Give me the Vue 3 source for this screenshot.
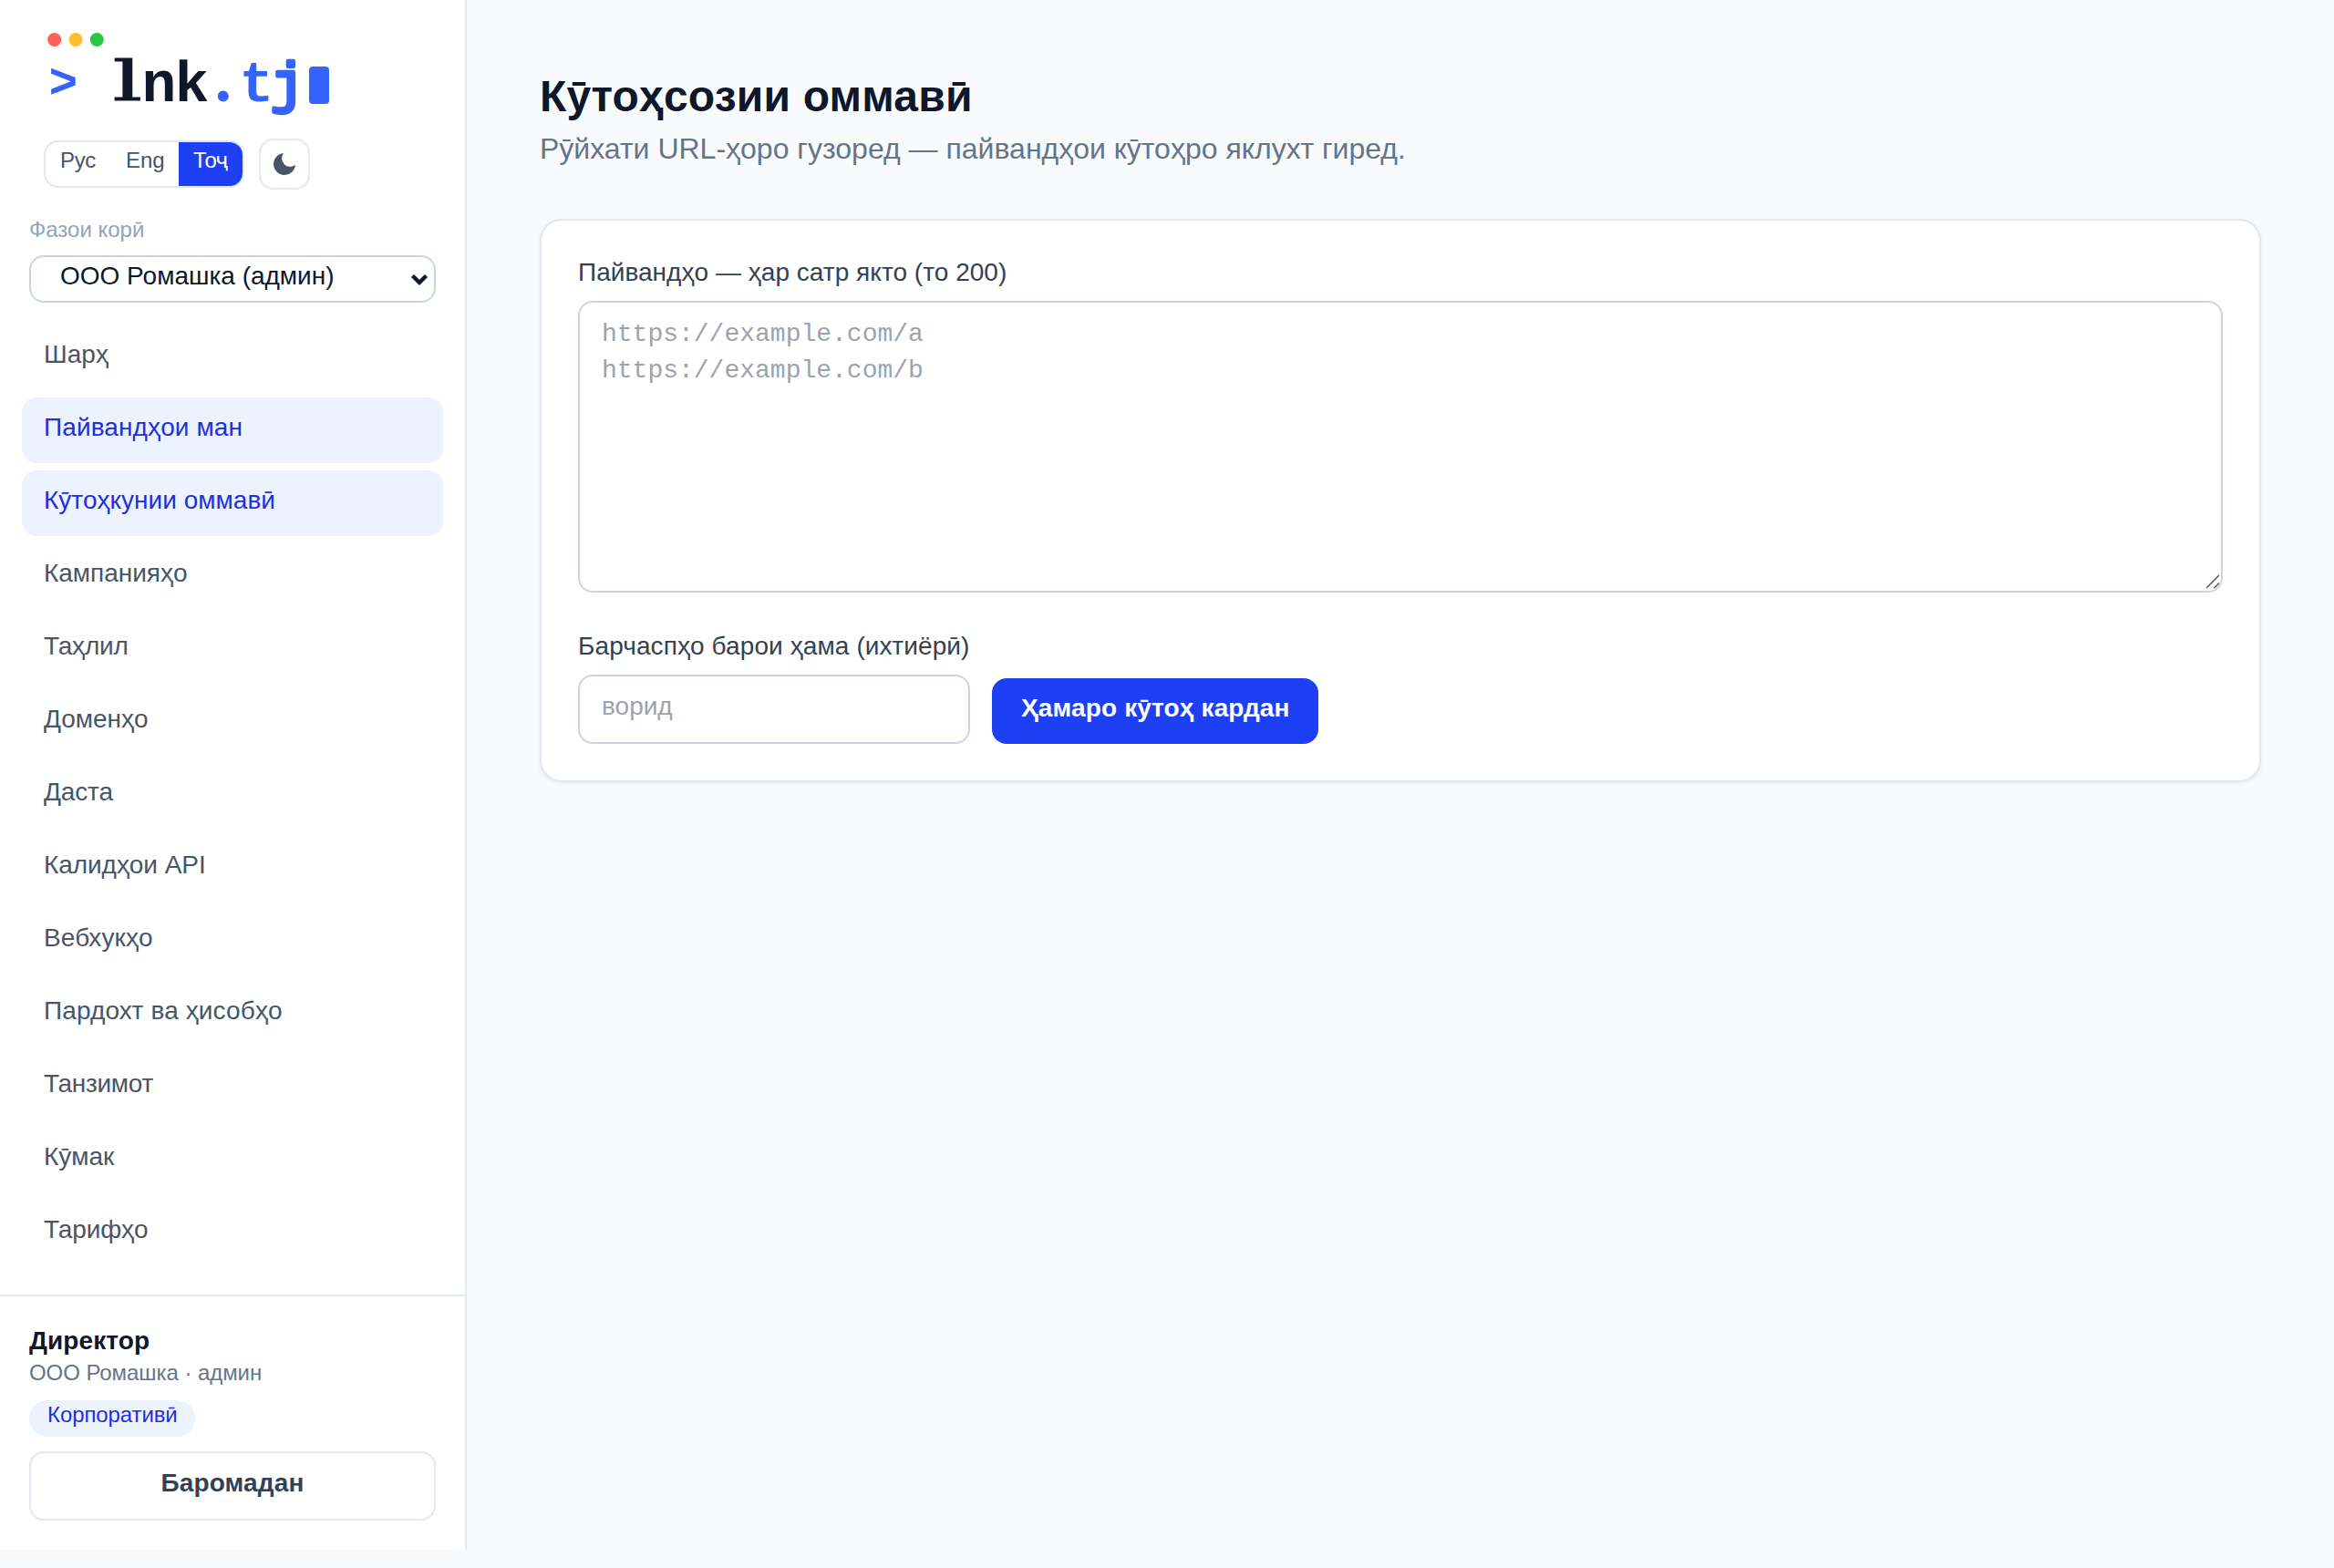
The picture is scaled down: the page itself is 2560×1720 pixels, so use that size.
<script setup>
const nav = [
  { text: 'Шарҳ', ls: 0.06 },
  { text: 'Пайвандҳои ман', ls: 0.109, active: true },
  { text: 'Кӯтоҳкунии оммавӣ', ls: 0.02, active: true },
  { text: 'Кампанияҳо', ls: -0.015 },
  { text: 'Таҳлил', ls: -0.179 },
  { text: 'Доменҳо', ls: -0.02 },
  { text: 'Даста', ls: -0.15 },
  { text: 'Калидҳои API', ls: -0.06 },
  { text: 'Вебхукҳо', ls: 0.1 },
  { text: 'Пардохт ва ҳисобҳо', ls: 0.118 },
  { text: 'Танзимот', ls: -0.3 },
  { text: 'Кӯмак', ls: -0.03 },
  { text: 'Тарифҳо', ls: -0.11 },
]
</script>

<template>
  <div class="page">
    <aside class="side">
      <svg class="logo" width="330" height="132" viewBox="0 0 330 132">
        <circle cx="27.7" cy="43.5" r="7.5" fill="#ff5f57" />
        <circle cx="51" cy="43.5" r="7.5" fill="#febc2e" />
        <circle cx="74.3" cy="43.5" r="7.5" fill="#28c840" />
        <g class="mono">
          <text class="prompt" x="21.5" y="107">&gt;</text>
          <text class="slab" transform="translate(91.6 110.3) scale(1.7 1)">l</text>
          <text class="name-text" y="111"><tspan x="123.5">n</tspan><tspan x="159.5">k</tspan></text>
          <text class="dot" x="203.5" y="111">.</text>
          <text class="tld" y="111"><tspan x="230.5">t</tspan><tspan class="soft" x="265">j</tspan></text>
        </g>
        <rect x="307" y="73" width="22" height="41" rx="4" fill="#3563ff" />
      </svg>
      <div class="tools">
        <div class="langs">
          <span class="ru">Рус</span><span class="en">Eng</span><span class="on">Тоҷ</span>
        </div>
        <div class="theme">
          <svg width="32" height="32" viewBox="0 0 24 24"><path fill="#475569" d="M21 12.79A9 9 0 1 1 11.21 3 7 7 0 0 0 21 12.79z" /></svg>
        </div>
      </div>
      <div class="ws">Фазои корӣ</div>
      <div class="select">
        <span>ООО Ромашка (админ)</span>
        <svg width="20" height="14" viewBox="0 0 20 14"><path d="M2.5 2.5 10 10l7.5-7.5" fill="none" stroke="#0f172a" stroke-width="4.4" /></svg>
      </div>
      <nav>
        <a v-for="n in nav" :key="n.text" :class="{ active: n.active }" :style="{ letterSpacing: n.ls + 'px' }">{{ n.text }}</a>
      </nav>
      <div class="user">
        <div class="name">Директор</div>
        <div class="org">ООО Ромашка · админ</div>
        <div class="pill">Корпоративӣ</div>
        <div class="logout">Баромадан</div>
      </div>
    </aside>
    <main>
      <h1>Кӯтоҳсозии оммавӣ</h1>
      <p>Рӯйхати URL-ҳоро гузоред — пайвандҳои кӯтоҳро яклухт гиред.</p>
      <section class="card">
        <div class="label">Пайвандҳо — ҳар сатр якто (то 200)</div>
        <div class="area">
          <textarea placeholder="https://example.com/a
https://example.com/b"></textarea>
          <svg class="grip" width="16" height="16" viewBox="0 0 16 16"><path d="M1 15 15 1M9.5 15 15 9.5" stroke="#555" stroke-width="1.5" /></svg>
        </div>
        <div class="row">
          <div class="field">
            <div class="label tags">Барчаспҳо барои ҳама (ихтиёрӣ)</div>
            <div class="input">ворид</div>
          </div>
          <div class="btn">Ҳамаро кӯтоҳ кардан</div>
        </div>
      </section>
    </main>
  </div>
</template>

<style>
body { background: #f8fafc; }
</style>
<style scoped>
* { box-sizing: border-box; }
.page { display: flex; height: 1720px; font-family: "Liberation Sans", Arial, sans-serif; background: #f8fafc; white-space: nowrap; }
.side { width: 512px; height: 1700px; background: #fff; border-right: 2px solid #e2e8f0; display: flex; flex-direction: column; flex: none; }
.logo { margin-left: 32px; display: block; overflow: visible; }
.mono { font: bold 63px "Liberation Mono", monospace; }
.prompt { font-size: 53px; fill: #3563ff; }
.name-text { fill: #0f172a; }
.tld { fill: #3563ff; }
.slab { font: 60px "DejaVu Serif", serif; fill: #0f172a; stroke: #0f172a; stroke-width: 1px; }
.dot { font: bold 74px "Liberation Serif", serif; fill: #3563ff; }
.soft { font-weight: normal; font-size: 61px; stroke: #3563ff; stroke-width: 4.4px; stroke-linejoin: round; }
.tools { display: flex; align-items: center; gap: 16px; margin: 20px 0 0 48px; height: 56px; }
.langs { display: flex; border: 2px solid #e2e8f0; border-radius: 16px; overflow: hidden; height: 52px; font-size: 24px; line-height: 39px; color: #475569; }
.langs span { padding-left: 16px; }
.langs .ru { width: 72px; letter-spacing: -0.2px; }
.langs .en { width: 74px; }
.langs .on { width: 70px; background: #1e40f5; color: #fff; letter-spacing: -0.4px; }
.theme { width: 56px; height: 56px; border: 2px solid #e2e8f0; border-radius: 16px; display: flex; align-items: center; justify-content: center; }
.ws { margin: 28px 0 0 32px; height: 32px; font-size: 24px; line-height: 31px; color: #94a3b8; }
.select { margin: 12px 32px 0; height: 52px; border: 2px solid #cbd5e1; border-radius: 16px; padding: 0 6px 0 32px; display: flex; justify-content: space-between; font-size: 28px; line-height: 41px; color: #0f172a; }
.select svg { margin-top: 18px; }
nav { margin: 24px 24px 0; display: flex; flex-direction: column; gap: 8px; }
nav a { height: 72px; border-radius: 16px; padding: 0 24px; font-size: 28px; line-height: 65px; color: #475569; }
nav a.active { background: #ecf3ff; color: #1d2fe0; }
.user { margin-top: auto; height: 280px; border-top: 2px solid #e2e8f0; padding: 32px; }
.name { height: 40px; font-size: 28px; line-height: 33px; font-weight: bold; letter-spacing: 0.1px; color: #0f172a; }
.org { height: 32px; font-size: 24px; line-height: 23px; letter-spacing: -0.06px; color: #64748b; }
.pill { width: 182px; margin-top: 10px; height: 40px; border-radius: 20px; padding-left: 20px; background: #ecf3ff; color: #1d2fe0; font-size: 24px; line-height: 31px; letter-spacing: -0.1px; }
.logout { margin-top: 16px; height: 76px; border: 2px solid #e2e8f0; border-radius: 16px; text-align: center; font-weight: bold; font-size: 28px; line-height: 65px; letter-spacing: 0.13px; color: #334155; }
main { flex: 1; padding: 80px 80px 0; }
h1 { margin: 0; font-size: 48px; height: 56px; line-height: 52px; letter-spacing: 0.2px; color: #0f172a; }
p { margin: 8px 0 0; height: 40px; font-size: 32px; line-height: 38px; color: #64748b; }
.card { margin-top: 56px; height: 618px; background: #fff; border: 2px solid #e2e8f0; border-radius: 24px; padding: 40px; box-shadow: 0 2px 4px rgba(15, 23, 42, 0.06); }
.label { height: 40px; font-size: 28px; line-height: 33px; letter-spacing: 0.03px; color: #334155; }
.tags { letter-spacing: 0.1px; }
.area { position: relative; margin-top: 8px; }
textarea { display: block; width: 100%; height: 320px; border: 2px solid #cbd5e1; border-radius: 16px; padding: 15px 24px; resize: none; font: 28px/40px "Liberation Mono", monospace; }
textarea::placeholder { color: #9ca3af; }
.grip { position: absolute; right: 3px; bottom: 4px; }
.row { display: flex; align-items: flex-end; gap: 24px; margin-top: 42px; }
.field { width: 430px; }
.input { margin-top: 8px; height: 76px; border: 2px solid #cbd5e1; border-radius: 16px; padding: 0 24px; font-size: 28px; line-height: 65px; color: #9ca3af; }
.btn { height: 72px; width: 358px; border-radius: 16px; background: #1e40f5; color: #fff; font-weight: bold; font-size: 28px; line-height: 65px; padding: 0 32px; letter-spacing: 0.15px; }
</style>
